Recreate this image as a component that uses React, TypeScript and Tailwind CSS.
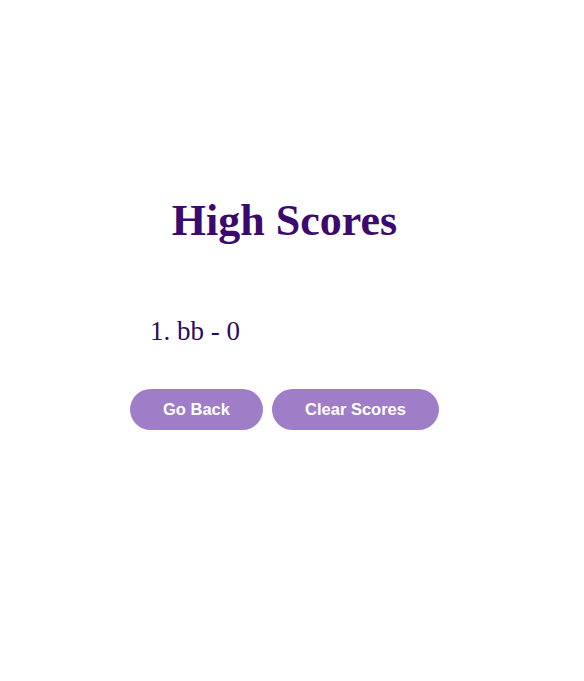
export default function App() {
  return (
    <div className="min-h-[681px] w-[569px] bg-white flex justify-center">
      <div className="mt-[195px] flex flex-col">
        <h1 className="text-center text-[44px] font-bold text-[#3c096c] font-['Liberation_Serif',serif] leading-[52px]">
          High Scores
        </h1>
        <div className="mt-[68px] pl-[20px] text-[27px] text-[#2d0a5c] font-['Liberation_Serif',serif] leading-[32px]">
          1. bb - 0
        </div>
        <div className="mt-[42px] flex gap-[9px]">
          <button className="h-[41px] w-[133px] rounded-full bg-[#a07dc7] text-white text-[16.5px] font-bold font-['Liberation_Sans',sans-serif]">
            Go Back
          </button>
          <button className="h-[41px] w-[167px] rounded-full bg-[#a07dc7] text-white text-[16.5px] font-bold font-['Liberation_Sans',sans-serif]">
            Clear Scores
          </button>
        </div>
      </div>
    </div>
  );
}
